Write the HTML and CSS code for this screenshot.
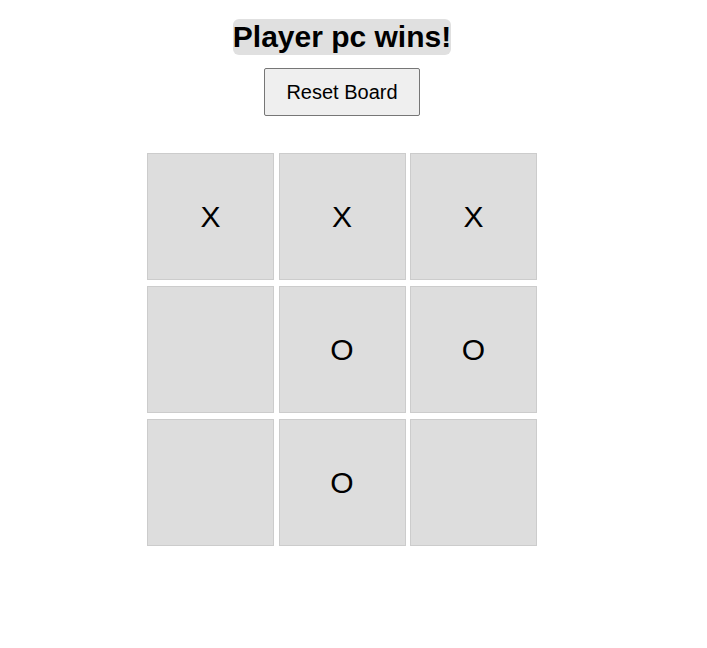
FILE: index.html
```html
<!DOCTYPE html>
<html lang="en">
<head>
<meta charset="utf-8">
<title>Tic Tac Toe</title>
<link rel="stylesheet" href="styles.css">
</head>
<body>
<main class="game">
  <h1 class="status">Player pc wins!</h1>
  <button class="reset" type="button">Reset Board</button>
  <div class="board">
    <button class="cell" type="button">X</button>
    <button class="cell" type="button">X</button>
    <button class="cell" type="button">X</button>
    <button class="cell" type="button" aria-label="Empty"></button>
    <button class="cell" type="button">O</button>
    <button class="cell" type="button">O</button>
    <button class="cell" type="button" aria-label="Empty"></button>
    <button class="cell" type="button">O</button>
    <button class="cell" type="button" aria-label="Empty"></button>
  </div>
</main>
</body>
</html>
```
FILE: styles.css
```css
* {
  box-sizing: border-box;
}

body {
  margin: 0;
  background: #fff;
  color: #000;
  font-family: "Liberation Sans", Arial, sans-serif;
}

.game {
  display: flex;
  flex-direction: column;
  align-items: center;
  padding: 19px 23px 0 0;
}

.status {
  margin: 0;
  border-radius: 6px;
  background: #e0e0e0;
  font-size: 30px;
  line-height: 36px;
}

.reset {
  margin: 13px 0 37px;
  padding: 0 21px;
  border: 1px solid #767676;
  border-radius: 2px;
  background: #efefef;
  color: #000;
  font: 20px/46px "Liberation Sans", Arial, sans-serif;
}

.board {
  display: grid;
  grid-template-columns: repeat(3, 127px);
  grid-auto-rows: 127px;
  justify-content: space-between;
  row-gap: 6px;
  width: 100%;
  max-width: 390px;
}

.cell {
  padding: 0;
  border: 1px solid #ccc;
  background: #ddd;
  color: #000;
  font: 30px "Liberation Sans", Arial, sans-serif;
}
```
